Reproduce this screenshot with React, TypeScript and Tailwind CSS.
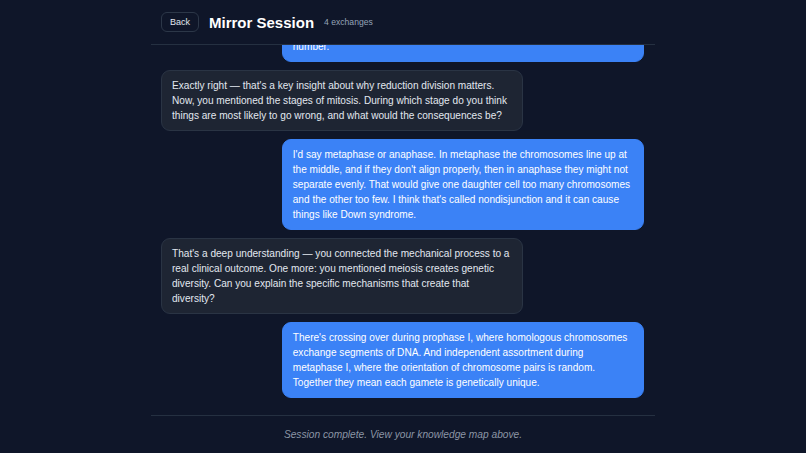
import React from "react";

type Message = {
    role: "user" | "mentor";
    text: string;
};

const messages: Message[] = [
    {
        role: "mentor",
        text: "Let's start simple. In your own words, what is the main difference between mitosis and meiosis, and why does the body need both?",
    },
    {
        role: "user",
        text: "Mitosis makes two identical cells for growth and repair. Meiosis makes four gametes with half the chromosomes, so when two gametes combine at fertilization the offspring ends up with the correct diploid chromosome number.",
    },
    {
        role: "mentor",
        text: "Exactly right — that's a key insight about why reduction division matters. Now, you mentioned the stages of mitosis. During which stage do you think things are most likely to go wrong, and what would the consequences be?",
    },
    {
        role: "user",
        text: "I'd say metaphase or anaphase. In metaphase the chromosomes line up at the middle, and if they don't align properly, then in anaphase they might not separate evenly. That would give one daughter cell too many chromosomes and the other too few. I think that's called nondisjunction and it can cause things like Down syndrome.",
    },
    {
        role: "mentor",
        text: "That's a deep understanding — you connected the mechanical process to a real clinical outcome. One more: you mentioned meiosis creates genetic diversity. Can you explain the specific mechanisms that create that diversity?",
    },
    {
        role: "user",
        text: "There's crossing over during prophase I, where homologous chromosomes exchange segments of DNA. And independent assortment during metaphase I, where the orientation of chromosome pairs is random. Together they mean each gamete is genetically unique.",
    },
];

const Bubble = ({ message }: { message: Message }) => {
    const isUser = message.role === "user";
    return (
        <div className={isUser ? "flex justify-end" : "flex justify-start"}>
            <div
                className={
                    isUser
                        ? "max-w-[75%] rounded-[9px] border border-[#3b82f6] bg-[#3b82f6] px-[10px] py-[7px] text-[10.1px] leading-[15px] text-white"
                        : "max-w-[75%] rounded-[9px] border border-[#2a3444] bg-[#1e2533] px-[10px] py-[7px] text-[10.1px] leading-[15px] text-[#e2e8f0]"
                }
            >
                {message.text}
            </div>
        </div>
    );
};

export default function App() {
    return (
        <div className="h-screen bg-[#0f1629] font-['Liberation_Sans',Arial,sans-serif]">
            <div className="mx-auto flex h-full max-w-[504px] flex-col">
                <header className="flex h-[45px] shrink-0 items-center gap-[10px] border-b border-[#253041] px-[10px]">
                    <button className="rounded-[6px] border border-[#2c3748] px-[8px] py-[3px] text-[9px] leading-[12px] font-medium text-[#e2e8f0]">
                        Back
                    </button>
                    <h1 className="text-[15px] leading-[21px] font-bold text-white">Mirror Session</h1>
                    <span className="text-[8.6px] text-[#94a3b8]">4 exchanges</span>
                </header>

                <div className="flex flex-1 flex-col justify-end gap-[8px] overflow-hidden pr-[11px] pb-[17px] pl-[10px]">
                    {messages.map((m, i) => (
                        <Bubble key={i} message={m} />
                    ))}
                </div>

                <footer className="flex h-[38px] shrink-0 items-center justify-center border-t border-[#253041]">
                    <p className="text-[10.2px] text-[#8b95a5] italic">Session complete. View your knowledge map above.</p>
                </footer>
            </div>
        </div>
    );
}
